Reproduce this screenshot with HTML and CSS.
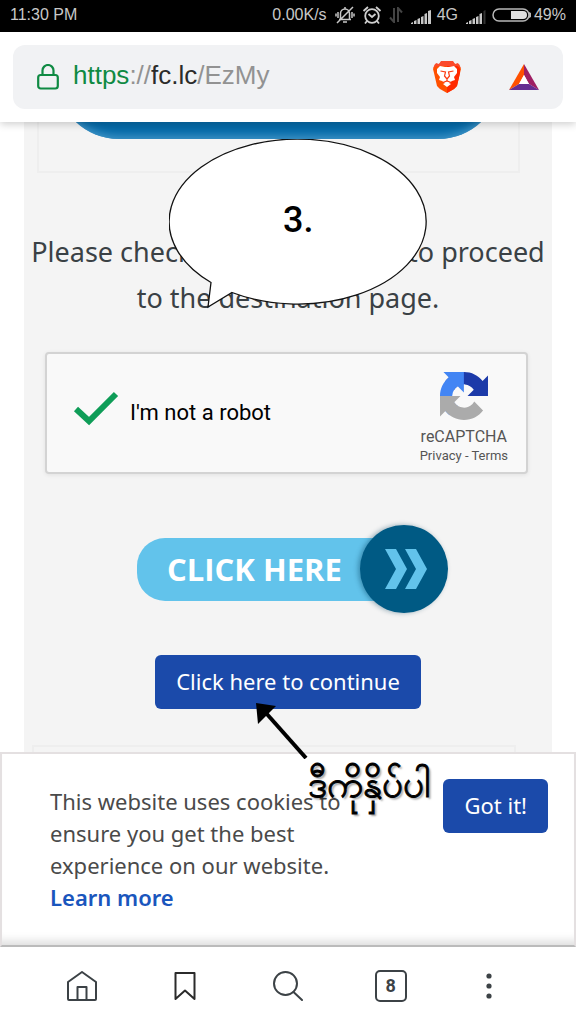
FILE: index.html
```html
<!DOCTYPE html>
<html lang="en">
<head>
  <meta charset="UTF-8">
  <meta name="viewport" content="width=device-width, initial-scale=1.0">
  <title>fc.lc/EzMy</title>
  <link rel="stylesheet" href="styles.css">
</head>
<body>
  <div class="status-bar">
    <span class="time">11:30 PM</span>
    <span>0.00K/s</span>
    <svg class="icon-bell" width="20" height="20" viewBox="0 0 20 20" fill="none" stroke="#c8c8c8" stroke-width="1.500">
      <path d="M4 14.500h12M5.500 14V8.500a4.500 4.500 0 0 1 9 0V14M10 2v2M8 17h4M2 18L18 2M3 7v6M1 8.500v3M17 7v6M19 8.500v3"/>
    </svg>
    <svg class="icon-alarm" width="20" height="20" viewBox="0 0 20 20" fill="none" stroke="#d0d0d0" stroke-width="1.800">
      <circle cx="10" cy="11" r="6.800"/>
      <path d="M6.500 9l3.500 3 3.500-3M1.500 6L6 2M18.500 6L14 2M5 16l-2 2.500M15 16l2 2.500"/>
    </svg>
    <svg class="icon-data" width="14" height="16" viewBox="0 0 14 16" fill="none" stroke="#444" stroke-width="2">
      <path d="M5 1v14L1 10.500M9 15V1l4 4.500"/>
    </svg>
    <svg class="icon-signal" width="20" height="14" viewBox="0 0 20 14" fill="#c8c8c8">
      <path d="M0 14v-1l2-1v2zM3 14v-3l2.500-1v4zM6.500 14V9L9 8v6zM10 14V7l2.500-1v8zM13.500 14V4L16 3v11zM17 14V1l3-1v14z"/>
    </svg>
    <span>4G</span>
    <svg class="icon-signal second" width="20" height="14" viewBox="0 0 20 14" fill="#c8c8c8">
      <path d="M0 14v-1l2-1v2zM3 14v-3l2.500-1v4zM6.500 14V9L9 8v6zM10 14V7l2.500-1v8zM13.500 14V4L16 3v11z"/>
      <path fill="#333" d="M17.500 14V1l2-1v14z"/>
    </svg>
    <svg class="icon-battery" width="39" height="14" viewBox="0 0 39 14">
      <rect x="1" y="1" width="36" height="12" rx="6" fill="none" stroke="#b8b8b8" stroke-width="1.500"/>
      <path fill="#ddd" d="M19 3h12a4 4 0 0 1 0 8H19z"/>
      <path fill="#b8b8b8" d="M37 4l2 1v4l-2 1z"/>
    </svg>
    <span>49%</span>
  </div>

  <header class="toolbar">
    <div class="address-bar">
      <svg width="22" height="26" viewBox="0 0 22 26" fill="none" stroke="#0f8a43" stroke-width="2.200">
        <rect x="1.200" y="11" width="19.600" height="13.500" rx="2.500"/>
        <path d="M5.500 11V6.500a5.500 5.500 0 0 1 11 0V11"/>
      </svg>
      <a class="url" href="#"><span class="scheme">https</span>://<span class="host">fc.lc</span>/EzMy</a>
      <button class="tool-btn" aria-label="Brave Shields">
        <svg width="28" height="32" viewBox="0 0 28 32">
          <path fill="#ff5000" d="M8 1h12l3 3 3-1 2 5-1 4-3 13-3 3-7 4-7-4-3-3L1 12 0 8l2-5 3 1z"/>
          <path fill="#ff2a00" d="M14 5h11l2 3v4l-3 13-3 3-7 4z"/>
          <path fill="#fb4a2c" d="M8 0h12l2 3 3-1 3 5-4-2H4L0 7l3-5 3 1z"/>
          <path fill="#fff" d="M4 8l3-3 5 1h4l5-1 3 3v4l-3 4 1 3-3 1-3 2 2 1-4 3-4-3 2-1-3-2-3-1 1-3-3-4z"/>
          <path fill="none" stroke="#fb3a10" stroke-width="1.200" d="M7.500 10l5 1-1 4 2.500 3 2.500-3-1-4 5-1M14 18v2.500M10 21.500l4-1.500 4 1.500"/>
        </svg>
      </button>
      <button class="tool-btn" aria-label="Brave Rewards">
        <svg width="30" height="26" viewBox="0 0 30 26">
          <path fill="#ff5000" d="M15 0v11l-5 9L0 26z"/>
          <path fill="#9e1f63" d="M15 0l15 26-10-6-5-9z"/>
          <path fill="#662d91" d="M0 26l10-6h10l10 6z"/>
          <path fill="#fff" d="M15 11l5 9H10z"/>
        </svg>
      </button>
    </div>
  </header>

  <main class="page">
    <div class="panel">
      <div class="ad-box">
        <div class="ad-pill"></div>
      </div>

      <p class="message">Please check the captcha box to proceed to the destination page.</p>

      <div class="captcha">
        <label class="captcha-check">
          <input type="checkbox" checked>
          <svg width="46" height="36" viewBox="0 0 46 36" fill="none" stroke="#0f9d58" stroke-width="6">
            <path d="M3 18l13 12L43 3"/>
          </svg>
          I'm not a robot
        </label>
        <div class="captcha-brand">
          <svg width="48" height="48" viewBox="0 0 64 64">
            <path fill="#1c3aa9" d="M64 31.955l-.033-1.370V4.687l-7.160 7.160C50.948 4.674 42.033.093 32.050.093c-10.400 0-19.622 4.960-25.458 12.640l11.736 11.860a15.550 15.550 0 0 1 4.754-5.334c2.050-1.600 4.952-2.906 8.968-2.906.485 0 .860.057 1.135.163 4.976.393 9.288 3.140 11.828 7.124l-8.307 8.307L64 31.953"/>
            <path fill="#4285f4" d="M31.862.094l-1.370.033H4.594l7.160 7.160C4.580 13.147 0 22.060 0 32.046c0 10.400 4.960 19.622 12.640 25.458L24.500 45.768a15.550 15.550 0 0 1-5.334-4.754c-1.600-2.050-2.906-4.952-2.906-8.968 0-.485.057-.860.163-1.135.393-4.976 3.140-9.288 7.124-11.828l8.307 8.307L31.860.095"/>
            <path fill="#ababab" d="M.001 32.045l.033 1.370v25.898l7.160-7.160c5.860 7.173 14.774 11.754 24.760 11.754 10.400 0 19.622-4.960 25.458-12.640l-11.736-11.860a15.550 15.550 0 0 1-4.754 5.334c-2.050 1.600-4.952 2.906-8.968 2.906-.485 0-.860-.057-1.135-.163-4.976-.393-9.288-3.140-11.828-7.124l8.307-8.307c-10.522.040-22.400.066-27.295-.005"/>
          </svg>
          <div class="captcha-name">reCAPTCHA</div>
          <div class="captcha-links"><a href="#">Privacy</a> - <a href="#">Terms</a></div>
        </div>
      </div>

      <a class="click-here" href="#">
        <span class="click-label">CLICK HERE</span>
        <span class="click-circle">
          <svg width="44" height="40" viewBox="0 0 44 40" fill="#62c3eb">
            <path d="M1 0h11l11 20-11 20H1l11-20zM21 0h11l11 20-11 20H21l11-20z"/>
          </svg>
        </span>
      </a>

      <button class="btn continue">Click here to continue</button>

      <div class="ad-box next"></div>
    </div>

    <!-- speech bubble -->
    <div class="bubble">
      <svg width="260" height="170" viewBox="0 0 260 170" fill="#fff" stroke="#111" stroke-width="1.300">
        <path d="M42 143.500L39 168l24-14.500A128.500 82.500 0 1 0 42 143.500z"/>
      </svg>
      <span>3.</span>
    </div>
  </main>

  <div class="cookie">
    <!-- pointer to the continue button -->
    <div class="pointer">
      <svg width="52" height="56" viewBox="0 0 52 56">
        <path fill="none" stroke="#000" stroke-width="4" d="M10 10l40 45"/>
        <path d="M0 0l20 3L2 21z"/>
      </svg>
      <span lang="my">ဒီကိုနှိပ်ပါ</span>
    </div>
    <p>This website uses cookies to ensure you get the best experience on our website. <a href="#">Learn more</a></p>
    <button class="btn">Got it!</button>
  </div>

  <nav class="nav">
    <button aria-label="Home">
      <svg width="30" height="30" viewBox="0 0 30 30" fill="none" stroke="#3c4246" stroke-width="2" stroke-linejoin="round">
        <path d="M1 28V11L15 1l14 10v17q0 1-1 1H2q-1 0-1-1zM10.500 29V16h9v13"/>
      </svg>
    </button>
    <button aria-label="Bookmarks">
      <svg width="22" height="30" viewBox="0 0 22 30" fill="none" stroke="#2b2b2b" stroke-width="2" stroke-linejoin="round">
        <path d="M1.500 2h19v26L11 19.500 1.500 28z"/>
      </svg>
    </button>
    <button aria-label="Search">
      <svg width="30" height="30" viewBox="0 0 30 30" fill="none" stroke="#3c4246" stroke-width="2" stroke-linecap="round">
        <circle cx="12.500" cy="12.500" r="11.500"/>
        <path d="M20.500 21l8.500 8"/>
      </svg>
    </button>
    <button aria-label="Tabs"><span class="tab-count">8</span></button>
    <button aria-label="Menu">
      <svg width="6" height="26" viewBox="0 0 6 26" fill="#3c4246">
        <circle cx="3" cy="3" r="2.600"/>
        <circle cx="3" cy="13" r="2.600"/>
        <circle cx="3" cy="23" r="2.600"/>
      </svg>
    </button>
  </nav>
</body>
</html>
```
FILE: styles.css
```css
* {
  box-sizing: border-box;
}
body {
  margin: 0;
  height: 100vh;
  display: flex;
  flex-direction: column;
  background: #fff;
  font-family: "Noto Sans", "Open Sans", sans-serif;
  color: #3a4145;
}
button {
  border: none;
  background: none;
  padding: 0;
  font-family: inherit;
  cursor: pointer;
}
a {
  text-decoration: none;
}
svg {
  display: block;
}

/* phone status bar */
.status-bar {
  flex: none;
  display: flex;
  align-items: center;
  height: 32px;
  padding: 0 10px 2px;
  background: #000;
  color: #c8c8c8;
  font: 16px "Liberation Sans", sans-serif;
}
.status-bar .time {
  margin-right: auto;
}
.icon-bell {
  margin-left: 8px;
}
.icon-alarm {
  margin-left: 7px;
}
.icon-data {
  margin-left: 7px;
}
.icon-signal {
  margin: 4px 6px 0 8px;
}
.icon-battery {
  margin-right: 3px;
}

/* browser toolbar */
.toolbar {
  flex: none;
  position: relative;
  z-index: 2;
  padding: 13px;
  background: #fff;
  box-shadow: 0 2px 8px rgba(0,0,0,0.2);
}
.address-bar {
  display: flex;
  align-items: center;
  height: 64px;
  padding: 0 24px;
  border-radius: 12px;
  background: #f1f2f4;
}
.url {
  flex: 1;
  margin: 0 14px;
  padding-bottom: 4px;
  font: 26px "Liberation Sans", sans-serif;
  color: #929292;
}
.url .scheme {
  color: #0f8a43;
}
.url .host {
  color: #2b2b2b;
}
.tool-btn + .tool-btn {
  margin-left: 48px;
}

/* web page */
.page {
  flex: 1;
  min-height: 0;
  position: relative;
  overflow: hidden;
}
.panel {
  display: flex;
  flex-direction: column;
  align-items: center;
  margin: 0 24px;
  background: #f4f4f4;
}
.ad-box {
  align-self: stretch;
  height: 51px;
  margin: 0 32px 0 13px;
  padding: 0 17px;
  border: 2px solid #eee;
  border-top: none;
}
.ad-pill {
  height: 126px;
  margin-top: -109px;
  border-radius: 63px;
  background: #066aa8;
  box-shadow: inset 0 -3px 8px #4296c8;
}
.ad-box.next {
  height: 100px;
  margin: 36px 36px 0 8px;
  border: 2px solid #eee;
}
.message {
  margin: 56px 0 31px;
  font-size: 27px;
  line-height: 46px;
  text-align: center;
}
.captcha {
  align-self: stretch;
  display: flex;
  justify-content: space-between;
  height: 122px;
  margin: 0 24px 0 21px;
  padding: 18px 18px 0 26px;
  border: 2px solid #d3d3d3;
  border-radius: 4px;
  background: #f9f9f9;
  box-shadow: 0 1px 4px rgba(0,0,0,0.08);
  font-family: Roboto, sans-serif;
}
.captcha-check {
  display: flex;
  align-items: center;
  gap: 11px;
  height: 80px;
  font-size: 22px;
  color: #000;
}
.captcha-check svg {
  margin-bottom: 6px;
}
.captcha-check input {
  position: absolute;
  opacity: 0;
}
.captcha-brand {
  display: flex;
  flex-direction: column;
  align-items: center;
  color: #555;
}
.captcha-name {
  margin-top: 7px;
  font-size: 16px;
  line-height: 20px;
}
.captcha-links {
  font-size: 13px;
  line-height: 18px;
}
.captcha-links a {
  color: #555;
}
.click-here {
  display: flex;
  align-items: center;
  margin: 51px 0 42px 9px;
}
.click-label {
  height: 63px;
  margin-right: -60px;
  padding: 0 78px 0 30px;
  border-radius: 28px 0 0 28px;
  background: #62c3eb;
  color: #fff;
  font-family: "Open Sans", sans-serif;
  font-size: 31px;
  font-weight: 700;
  line-height: 63px;
}
.click-circle {
  display: flex;
  align-items: center;
  justify-content: center;
  width: 88px;
  height: 88px;
  padding-left: 4px;
  border-radius: 50%;
  background: #005a84;
  box-shadow: -2px 0 5px rgba(0,60,90,0.4);
}
.btn {
  height: 54px;
  padding: 0 21px 2px;
  border-radius: 6px;
  background: #1b4aaa;
  color: #fff;
  font-size: 22px;
}

/* drawn over the page */
.bubble {
  position: absolute;
  top: 17px;
  left: 50%;
  margin-left: -119px;
}
.bubble span {
  position: absolute;
  top: 60px;
  left: 114px;
  color: #000;
  font: 500 36px Roboto, sans-serif;
}
.pointer {
  position: absolute;
  top: -51px;
  left: 254px;
  color: #000;
}
.pointer span {
  position: absolute;
  top: 56px;
  left: 52px;
  white-space: nowrap;
  font-size: 37px;
  line-height: 48px;
  -webkit-text-stroke: 1px #000;
  text-shadow: 2px 2px 2px rgba(0,0,0,0.4);
}

/* cookie notice */
.cookie {
  flex: none;
  position: relative;
  display: flex;
  align-items: flex-start;
  padding: 25px 26px 32px 48px;
  border: 2px solid #e4e0e1;
  border-bottom-color: #bbb;
  box-shadow: inset 0 -12px 10px -8px #ddd;
}
.cookie p {
  flex: 1;
  margin: 6px 70px 0 0;
  color: #4a4a4a;
  font-size: 22px;
  line-height: 32px;
}
.cookie p a {
  color: #1a56bd;
  font-weight: 600;
}

/* bottom navigation */
.nav {
  flex: none;
  display: grid;
  grid-template-columns: repeat(4, 10fr) 9fr;
  height: 77px;
  padding: 0 41px 0 30px;
  background: #fff;
}
.nav button {
  display: flex;
  align-items: center;
  justify-content: center;
}
.tab-count {
  width: 32px;
  height: 32px;
  border: 2px solid #3c4246;
  border-radius: 5px;
  color: #3c4246;
  font: 700 18px/28px Roboto, sans-serif;
}
```
